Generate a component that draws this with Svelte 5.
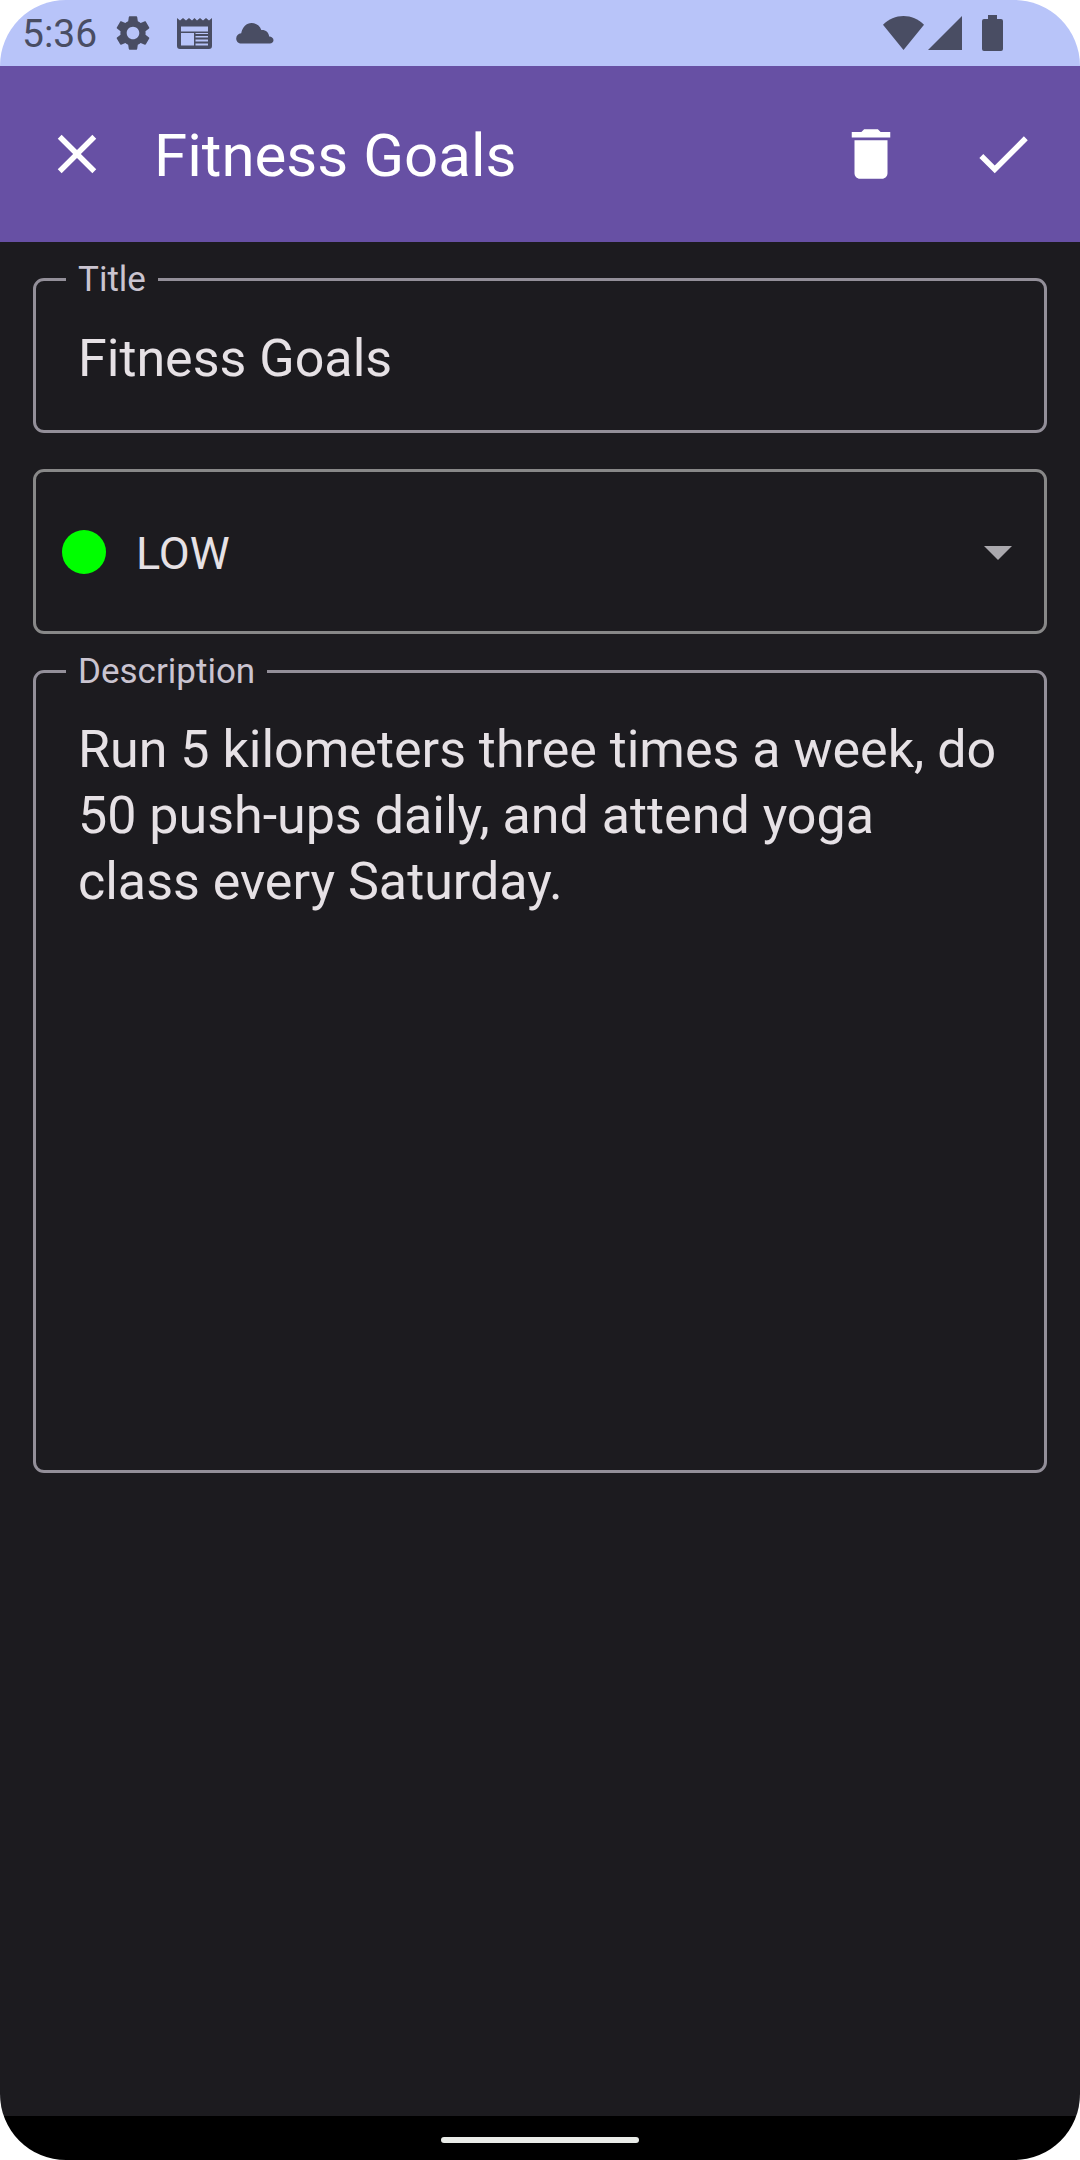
<script>
  let title = $state('Fitness Goals');
  let priority = $state('LOW');
  let description = $state(
    'Run 5 kilometers three times a week, do 50 push-ups daily, and attend yoga class every Saturday.'
  );
</script>

<div class="screen">
  <div class="status">
    <span class="time">5:36</span>
    <svg class="gear" viewBox="0 0 24 24" aria-hidden="true">
      <path d="M19.14 12.94c.04-.3.06-.61.06-.94 0-.32-.02-.64-.07-.94l2.03-1.58c.18-.14.23-.41.12-.61l-1.92-3.32c-.12-.22-.37-.29-.59-.22l-2.39.96c-.5-.38-1.03-.7-1.62-.94L14.4 2.81C14.36 2.57 14.16 2.4 13.92 2.4h-3.84c-.24 0-.43.17-.47.41l-.36 2.54c-.59.24-1.13.57-1.62.94l-2.39-.96c-.22-.08-.47 0-.59.22L2.74 8.87c-.12.21-.08.47.12.61l2.03 1.58c-.05.3-.09.63-.09.94s.02.64.07.94l-2.03 1.58c-.18.14-.23.41-.12.61l1.92 3.32c.12.22.37.29.59.22l2.39-.96c.5.38 1.03.7 1.62.94l.36 2.54c.05.24.24.41.48.41h3.84c.24 0 .44-.17.47-.41l.36-2.54c.59-.24 1.13-.56 1.62-.94l2.39.96c.22.08.47 0 .59-.22l1.92-3.32c.12-.22.07-.47-.12-.61l-2.01-1.58zM12 15.6c-1.98 0-3.6-1.62-3.6-3.6s1.62-3.6 3.6-3.6 3.6 1.62 3.6 3.6-1.62 3.6-3.6 3.6z" />
    </svg>
    <svg class="news" viewBox="0 0 35 31" aria-hidden="true">
      <path fill-rule="evenodd" d="M0 0l3 2.5 3-2.5 3 2.5 3-2.5 3 2.5 2.5-2.5 2.5 2.5 3-2.5 3 2.5 3-2.5 3 2.5 3-2.5H35v28a3 3 0 0 1-3 3H3a3 3 0 0 1-3-3zM4 8.5v5h27v-5zM4 15v12.5h13V15zM18.5 15v1h12.5v-1zM18.5 18v1.5h12.5V18zM18.5 21.5v2h12.5v-2zM18.5 25.5v2h12.5v-2z" />
    </svg>
    <svg class="cloud" viewBox="0 0 38 21" aria-hidden="true">
      <path d="M5.5 20.5C2.5 20.5.2 18.3.2 15.4c0-2.7 2-4.9 5-5.2C6.5 4 10.5.1 15.6.1c4.4 0 8.3 2.7 9.7 6.9 4.5-.3 7.5 2.5 7.9 6.6 2.6.2 4.3 1.6 4.3 3.6 0 1.9-1.6 3.3-3.6 3.3z" />
    </svg>
    <span class="spacer"></span>
    <svg class="wifi" viewBox="0 0 41 34" aria-hidden="true">
      <path d="M20.5 34L0 8.8C5.5 3 13 0 20.5 0S35.5 3 41 8.8z" />
    </svg>
    <svg class="signal" viewBox="0 0 34 34" aria-hidden="true"><path d="M34 0v34H0z" /></svg>
    <svg class="battery" viewBox="0 0 21 36" aria-hidden="true">
      <path d="M6 0h9v4h4a2 2 0 0 1 2 2v28a2 2 0 0 1-2 2H2a2 2 0 0 1-2-2V6a2 2 0 0 1 2-2h4z" />
    </svg>
  </div>

  <header>
    <button type="button" aria-label="Close">
      <svg viewBox="0 0 24 24"><path d="M19 6.41L17.59 5 12 10.59 6.41 5 5 6.41 10.59 12 5 17.59 6.41 19 12 13.41 17.59 19 19 17.59 13.41 12z" /></svg>
    </button>
    <h1>Fitness Goals</h1>
    <button type="button" aria-label="Delete">
      <svg viewBox="0 0 24 24"><path d="M6 19c0 1.1.9 2 2 2h8c1.1 0 2-.9 2-2V7H6v12zM19 4h-3.5l-1-1h-5l-1 1H5v2h14V4z" /></svg>
    </button>
    <button type="button" aria-label="Save">
      <svg viewBox="0 0 24 24"><path d="M9 16.17L4.83 12l-1.42 1.41L9 19 21 7l-1.41-1.41z" /></svg>
    </button>
  </header>

  <main>
    <fieldset>
      <legend><label for="title">Title</label></legend>
      <input id="title" type="text" bind:value={title} />
    </fieldset>

    <div class="priority">
      <span class="dot"></span>
      <select aria-label="Priority" bind:value={priority}>
        <option>HIGH</option>
        <option>MEDIUM</option>
        <option>LOW</option>
      </select>
      <svg class="arrow" viewBox="0 0 28 16" aria-hidden="true"><path d="M0 2h28L14 16z" /></svg>
    </div>

    <fieldset>
      <legend><label for="description">Description</label></legend>
      <textarea id="description" rows="11" spellcheck="false" bind:value={description}></textarea>
    </fieldset>
  </main>

  <div class="nav"><span class="handle"></span></div>
</div>

<style>
  :global(body) {
    background: #fff;
  }

  .screen {
    display: flex;
    flex-direction: column;
    min-height: 100vh;
    border-radius: 66px;
    overflow: hidden;
    color: #e6e1e5;
    font-family: Roboto, "Liberation Sans", sans-serif;
  }

  svg {
    display: block;
    flex: none;
    fill: currentColor;
  }

  .status {
    display: flex;
    align-items: center;
    height: 66px;
    padding: 0 77px 0 22px;
    background: #b8c4f9;
    color: #494d63;
  }

  .time {
    padding-top: 2px;
    font-size: 39px;
    line-height: 44px;
  }

  .gear {
    width: 42px;
    height: 42px;
    margin-left: 15px;
  }

  .news {
    width: 35px;
    height: 31px;
    margin-left: 23px;
  }

  .cloud {
    width: 38px;
    height: 21px;
    margin-left: 24px;
  }

  .spacer {
    flex: 1;
  }

  .wifi {
    width: 41px;
    height: 34px;
  }

  .signal {
    width: 34px;
    height: 34px;
    margin-left: 4px;
  }

  .battery {
    width: 21px;
    height: 36px;
    margin-left: 20px;
  }

  header {
    display: flex;
    align-items: center;
    height: 176px;
    padding: 0 11px;
    background: #6750a4;
    color: #fff;
  }

  header button {
    display: grid;
    place-items: center;
    width: 132px;
    height: 132px;
    padding: 0;
    border: 0;
    background: none;
    color: inherit;
  }

  header svg {
    width: 66px;
    height: 66px;
  }

  h1 {
    flex: 1;
    margin: 0;
    padding: 4px 0 0 11px;
    font-size: 60px;
    font-weight: 400;
    line-height: 72px;
  }

  main {
    flex: 1;
    display: flex;
    flex-direction: column;
    padding: 18px 33px;
    background: #1c1b1f;
  }

  fieldset {
    min-width: 0;
    margin: 0;
    padding: 0;
    border: 3px solid #938f99;
    border-radius: 11px;
  }

  legend {
    margin-left: 30px;
    padding: 0 12px;
    color: #cac4d0;
    font-size: 35px;
    line-height: 39px;
  }

  legend label {
    display: block;
  }

  input,
  textarea {
    display: block;
    box-sizing: border-box;
    width: 100%;
    margin: 0;
    border: 0;
    outline: 0;
    background: none;
    color: inherit;
    font-family: inherit;
    font-size: 52px;
    line-height: 66px;
  }

  input {
    height: 131px;
    padding: 26px 42px 39px;
  }

  textarea {
    padding: 26px 42px 27px;
    resize: none;
    overflow: hidden;
  }

  .priority {
    display: flex;
    align-items: center;
    box-sizing: border-box;
    height: 165px;
    margin: 36px 0 18px;
    padding: 0 32px 0 26px;
    border: 3px solid #888;
    border-radius: 11px;
  }

  .dot {
    width: 44px;
    height: 44px;
    border-radius: 50%;
    background: #0f0;
  }

  select {
    flex: 1;
    height: 132px;
    margin: 0;
    padding: 4px 0 0 30px;
    appearance: none;
    border: 0;
    outline: 0;
    background: none;
    color: inherit;
    font-family: inherit;
    font-size: 45px;
  }

  .arrow {
    width: 28px;
    height: 16px;
    color: #aaa8ad;
  }

  .nav {
    display: grid;
    place-items: center;
    height: 44px;
    padding-top: 4px;
    box-sizing: border-box;
    background: #000;
  }

  .handle {
    width: 198px;
    height: 6px;
    border-radius: 3px;
    background: #e9ebe8;
  }
</style>
